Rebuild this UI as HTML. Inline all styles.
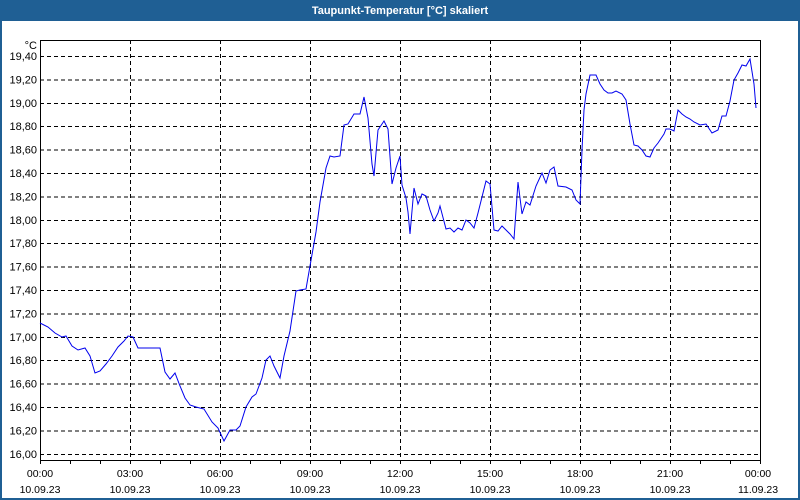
<!DOCTYPE html>
<html><head><meta charset="utf-8"><style>
html,body{margin:0;padding:0;background:#fff;}
body{width:800px;height:500px;overflow:hidden;position:relative;font-family:"Liberation Sans",sans-serif;}
</style></head><body>
<svg width="800" height="500" xmlns="http://www.w3.org/2000/svg" style="position:absolute;left:0;top:0" font-family="Liberation Sans, sans-serif" font-size="11">
<rect x="0" y="0" width="800" height="500" fill="#1f5f94"/>
<rect x="2" y="21" width="796" height="477" fill="#ffffff"/>
<text x="400" y="14" text-anchor="middle" fill="#fff" font-weight="bold" font-size="11">Taupunkt-Temperatur [°C] skaliert</text>
<g stroke="#000" stroke-width="1" stroke-dasharray="4,3" shape-rendering="crispEdges">
<line x1="40" x2="760" y1="56.5" y2="56.5"/>
<line x1="40" x2="760" y1="79.9" y2="79.9"/>
<line x1="40" x2="760" y1="103.3" y2="103.3"/>
<line x1="40" x2="760" y1="126.7" y2="126.7"/>
<line x1="40" x2="760" y1="150.1" y2="150.1"/>
<line x1="40" x2="760" y1="173.5" y2="173.5"/>
<line x1="40" x2="760" y1="196.9" y2="196.9"/>
<line x1="40" x2="760" y1="220.3" y2="220.3"/>
<line x1="40" x2="760" y1="243.7" y2="243.7"/>
<line x1="40" x2="760" y1="267.1" y2="267.1"/>
<line x1="40" x2="760" y1="290.5" y2="290.5"/>
<line x1="40" x2="760" y1="313.9" y2="313.9"/>
<line x1="40" x2="760" y1="337.3" y2="337.3"/>
<line x1="40" x2="760" y1="360.7" y2="360.7"/>
<line x1="40" x2="760" y1="384.1" y2="384.1"/>
<line x1="40" x2="760" y1="407.5" y2="407.5"/>
<line x1="40" x2="760" y1="430.9" y2="430.9"/>
<line x1="40" x2="760" y1="454.3" y2="454.3"/>
<line y1="40" y2="460" x1="130.5" x2="130.5"/>
<line y1="40" y2="460" x1="220.5" x2="220.5"/>
<line y1="40" y2="460" x1="310.5" x2="310.5"/>
<line y1="40" y2="460" x1="400.5" x2="400.5"/>
<line y1="40" y2="460" x1="490.5" x2="490.5"/>
<line y1="40" y2="460" x1="580.5" x2="580.5"/>
<line y1="40" y2="460" x1="670.5" x2="670.5"/>
</g>
<rect x="40.5" y="40.5" width="720" height="420" fill="none" stroke="#000" stroke-width="1" shape-rendering="crispEdges"/>
<g stroke="#000" shape-rendering="crispEdges">
<path d="M40.5 460v4M70.5 460v4M100.5 460v4M130.5 460v4M160.5 460v4M190.5 460v4M220.5 460v4M250.5 460v4M280.5 460v4M310.5 460v4M340.5 460v4M370.5 460v4M400.5 460v4M430.5 460v4M460.5 460v4M490.5 460v4M520.5 460v4M550.5 460v4M580.5 460v4M610.5 460v4M640.5 460v4M670.5 460v4M700.5 460v4M730.5 460v4M760.5 460v4"/>
</g>
<polyline fill="none" stroke="#0000ee" stroke-width="1" points="40,323 48,327 55,333 62,337 66,336 72,346 78,350 85,348 90,356 95,373 100,371 106,364 112,356 118,347 124,341 128,336 133,337 138,348 145,348 160,348 165,372 170,379 175,373 180,386 185,398 190,405 196,407 204,409 212,422 218,428 224,441 230,430 236,430 240,426 246,407 252,397 256,394 262,378 266,360 270,356 274,366 280,378 284,356 290,331 296,291 300,290 306,289 310,266 316,232 320,202 326,168 330,156 334,157 340,156 344,125 348,124 354,114 360,114 364,97 368,118 372,164 374,176 378,130 384,121 388,129 392,184 396,168 400,156 402,185 406,198 408,212 410,234 414,188 418,204 422,194 426,196 430,210 434,221 438,213 440,206 446,229 450,228 454,232 458,228 462,230 466,220 470,223 474,228 478,213 482,197 486,181 490,184 494,230 498,231 502,226 506,230 510,234 514,239 518,182 522,214 526,202 530,205 536,186 542,173 546,183 550,170 554,167 558,186 566,187 572,190 576,200 580,204 582,150 584,110 586,94 590,75 596,75 600,84 604,90 608,93 612,93 616,91 622,94 626,100 630,124 634,145 638,146 642,150 646,156 650,157 654,148 658,143 664,134 666,129 670,129 674,131 678,110 682,114 686,117 690,119 694,122 700,125 706,124 712,133 718,130 722,116 726,116 730,101 734,80 738,73 742,65 746,66 750,59 754,84 756,108"/>
<g fill="#000" text-anchor="end">
<text x="37" y="49">°C</text>
<text x="37" y="60">19,40</text>
<text x="37" y="83.4">19,20</text>
<text x="37" y="106.8">19,00</text>
<text x="37" y="130.2">18,80</text>
<text x="37" y="153.6">18,60</text>
<text x="37" y="177">18,40</text>
<text x="37" y="200.4">18,20</text>
<text x="37" y="223.8">18,00</text>
<text x="37" y="247.2">17,80</text>
<text x="37" y="270.6">17,60</text>
<text x="37" y="294">17,40</text>
<text x="37" y="317.4">17,20</text>
<text x="37" y="340.8">17,00</text>
<text x="37" y="364.2">16,80</text>
<text x="37" y="387.6">16,60</text>
<text x="37" y="411">16,40</text>
<text x="37" y="434.4">16,20</text>
<text x="37" y="457.8">16,00</text>
</g>
<g fill="#000" text-anchor="middle" font-size="10.5">
<text x="40" y="477">00:00</text><text x="40" y="493">10.09.23</text>
<text x="130" y="477">03:00</text><text x="130" y="493">10.09.23</text>
<text x="220" y="477">06:00</text><text x="220" y="493">10.09.23</text>
<text x="310" y="477">09:00</text><text x="310" y="493">10.09.23</text>
<text x="400" y="477">12:00</text><text x="400" y="493">10.09.23</text>
<text x="490" y="477">15:00</text><text x="490" y="493">10.09.23</text>
<text x="580" y="477">18:00</text><text x="580" y="493">10.09.23</text>
<text x="670" y="477">21:00</text><text x="670" y="493">10.09.23</text>
<text x="758" y="477">00:00</text><text x="758" y="493">11.09.23</text>
</g>
</svg>
</body></html>
